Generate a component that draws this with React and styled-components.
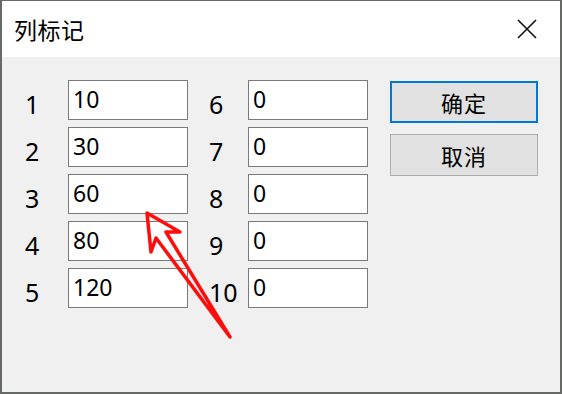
import styled, { createGlobalStyle } from 'styled-components';

const GlobalStyle = createGlobalStyle`
  html, body {
    margin: 0;
    padding: 0;
    background: #666a66;
  }
  * {
    box-sizing: border-box;
  }
`;

const left = ['10', '30', '60', '80', '120'];
const right = ['0', '0', '0', '0', '0'];

export default function App() {
  return (
    <>
      <GlobalStyle />
      <Frame>
        <Window>
          <TitleBar>
            <Title>列标记</Title>
            <CloseButton aria-label="关闭">
              <svg width="20" height="20" viewBox="0 0 20 20">
                <path d="M1 1 L19 19 M19 1 L1 19" stroke="#111" strokeWidth="1.6" fill="none" />
              </svg>
            </CloseButton>
          </TitleBar>
          <Body>
            <Column>
              {left.map((v, i) => (
                <Row key={i}>
                  <Label $width={45}>{i + 1}</Label>
                  <Field defaultValue={v} />
                </Row>
              ))}
            </Column>
            <Column $gap={19}>
              {right.map((v, i) => (
                <Row key={i}>
                  <Label $width={41}>{i + 6}</Label>
                  <Field defaultValue={v} />
                </Row>
              ))}
            </Column>
            <Buttons>
              <Button $primary>确定</Button>
              <Button>取消</Button>
            </Buttons>
            <Arrow width="562" height="394" viewBox="0 0 562 394">
              <polygon
                points="147,213 151,252 156,238 230,337 166,232 180,232"
                fill="none"
                stroke="#ff0d0d"
                strokeWidth="3.5"
                strokeLinejoin="round"
              />
            </Arrow>
          </Body>
        </Window>
      </Frame>
    </>
  );
}

const Frame = styled.div`
  width: 562px;
  height: 394px;
  padding: 1px 2px 2px 2px;
`;

const Window = styled.div`
  display: flex;
  flex-direction: column;
  height: 100%;
  background: #f0f0f0;
  font-family: "Noto Sans", "Noto Sans CJK SC", sans-serif;
  color: #000;
`;

const TitleBar = styled.div`
  display: flex;
  align-items: center;
  justify-content: space-between;
  height: 56px;
  padding: 0 23px 0 12px;
  background: #fff;
`;

const Title = styled.div`
  font-family: "Noto Sans CJK SC", sans-serif;
  font-size: 23px;
  letter-spacing: 0.5px;
`;

const CloseButton = styled.div`
  display: flex;
  width: 20px;
  height: 20px;
`;

const Body = styled.div`
  position: relative;
  flex: 1;
  display: flex;
  align-items: flex-start;
  padding: 23px 0 0 21px;
`;

const Column = styled.div`
  display: flex;
  flex-direction: column;
  gap: 7px;
  margin-left: ${(p) => p.$gap || 0}px;
`;

const Row = styled.div`
  display: flex;
  height: 40px;
`;

const Label = styled.div`
  width: ${(p) => p.$width}px;
  height: 40px;
  font-size: 25px;
  line-height: 48px;
  padding-left: 2px;
`;

const Field = styled.input`
  width: 120px;
  height: 40px;
  border: 1px solid #7a7a7a;
  background: #fff;
  padding: 0 0 2px 4px;
  font-family: "Noto Sans", sans-serif;
  font-size: 23px;
  color: #000;
  outline: none;
`;

const Buttons = styled.div`
  display: flex;
  flex-direction: column;
  gap: 11px;
  margin: 1px 0 0 22px;
`;

const Button = styled.div`
  display: flex;
  align-items: center;
  justify-content: center;
  width: 148px;
  height: 42px;
  background: #e1e1e1;
  border: ${(p) => (p.$primary ? '2px solid #0078d7' : '1px solid #adadad')};
  font-family: "Noto Sans CJK SC", sans-serif;
  font-size: 22px;
  letter-spacing: 1px;
`;

const Arrow = styled.svg`
  position: absolute;
  left: -2px;
  top: -57px;
  pointer-events: none;
`;
